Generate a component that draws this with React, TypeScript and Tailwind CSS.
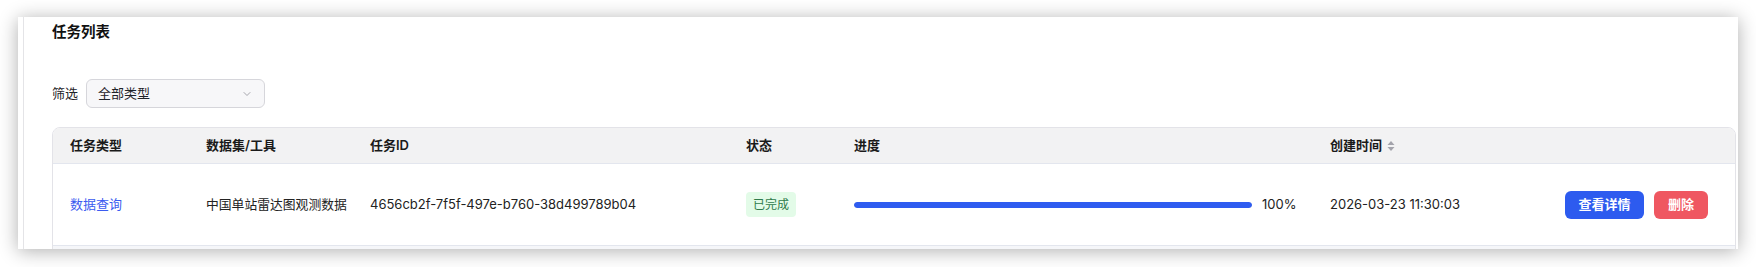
import { ChevronDown } from "lucide-react";

const font = { fontFamily: 'Inter, "Noto Sans CJK SC", "Noto Sans", sans-serif' };

const SortIcon = () => (
  <svg width="8" height="12" viewBox="0 0 8 12" className="ml-[5px]">
    <path d="M4 1 L7.5 5 H0.5 Z" fill="#a3a3ab" />
    <path d="M4 11 L7.5 7 H0.5 Z" fill="#a3a3ab" />
  </svg>
);

const App = () => {
  const cols = "grid grid-cols-[135px_164px_376px_108px_476px_235px_1fr]";

  return (
    <div className="w-[1756px] h-[267px] bg-white overflow-hidden" style={font}>
      <div className="ml-[18px] mt-[17px] w-[1720px] h-[232px] bg-white overflow-hidden flex shadow-[0_2px_18px_rgba(0,0,0,0.32)]">
        {/* left page border */}
        <div className="w-[6px] shrink-0 border-r border-[#e4e4e7]" />

        <div className="flex-1 pl-[28px] pt-[5px] text-[#1f2328]">
          <h2 className="h-[20px] leading-[20px] text-[14.5px] font-semibold text-[#111]">任务列表</h2>

          {/* Filter */}
          <div className="flex items-center gap-[8px] mt-[37px] h-[29px]">
            <span className="text-[13px]">筛选</span>
            <button className="w-[179px] h-[29px] flex items-center justify-between px-[11px] bg-[#f7f7f9] border border-[#d6d6db] rounded-[6px] text-[13px]">
              <span>全部类型</span>
              <ChevronDown className="w-[12px] h-[12px] text-[#8a8a93]" strokeWidth={1.5} />
            </button>
          </div>

          {/* Table */}
          <div className="mt-[19px] w-[1684px] border border-[#e3e3e8] rounded-t-[8px] overflow-hidden">
            <div className={`${cols} h-[36px] items-center bg-[#f2f2f3] border-b border-[#e3e6ee] text-[13px] font-semibold text-[#1a1a1a]`}>
              <div className="pl-[17px]">任务类型</div>
              <div className="pl-[18px]">数据集/工具</div>
              <div className="pl-[18px]">任务ID</div>
              <div className="pl-[18px]">状态</div>
              <div className="pl-[18px]">进度</div>
              <div className="pl-[18px] flex items-center">
                创建时间
                <SortIcon />
              </div>
              <div />
            </div>

            <div className={`${cols} h-[82px] items-center border-b border-[#e3e6ee] text-[13px] text-[#222]`}>
              <div className="pl-[17px] text-[#3b5bf0]">数据查询</div>
              <div className="pl-[18px] text-[12.8px]">中国单站雷达图观测数据</div>
              <div className="pl-[18px]">4656cb2f-7f5f-497e-b760-38d499789b04</div>
              <div className="pl-[18px]">
                <span className="inline-flex items-center h-[25px] px-[7px] rounded-[4px] bg-[#e3fbe8] text-[12px] text-[#2f7a4b]">
                  已完成
                </span>
              </div>
              <div className="pl-[18px] flex items-center">
                <div className="w-[398px] h-[6px] rounded-full bg-[#e5e7eb] overflow-hidden">
                  <div className="h-full bg-[#2f5cf0] rounded-full" style={{ width: "100%" }} />
                </div>
                <span className="ml-[10px]">100%</span>
              </div>
              <div className="pl-[18px]">2026-03-23 11:30:03</div>
              <div className="pl-[18px] flex items-center gap-[10px]">
                <button className="h-[28px] w-[79px] rounded-[6px] bg-[#2d5bef] text-white text-[13px] font-semibold">
                  查看详情
                </button>
                <button className="h-[28px] w-[54px] rounded-[6px] bg-[#ef5761] text-white text-[13px] font-semibold">
                  删除
                </button>
              </div>
            </div>

            <div className="h-[12px] bg-[#f5f6f9]" />
          </div>
        </div>
      </div>
    </div>
  );
};

export default App;
